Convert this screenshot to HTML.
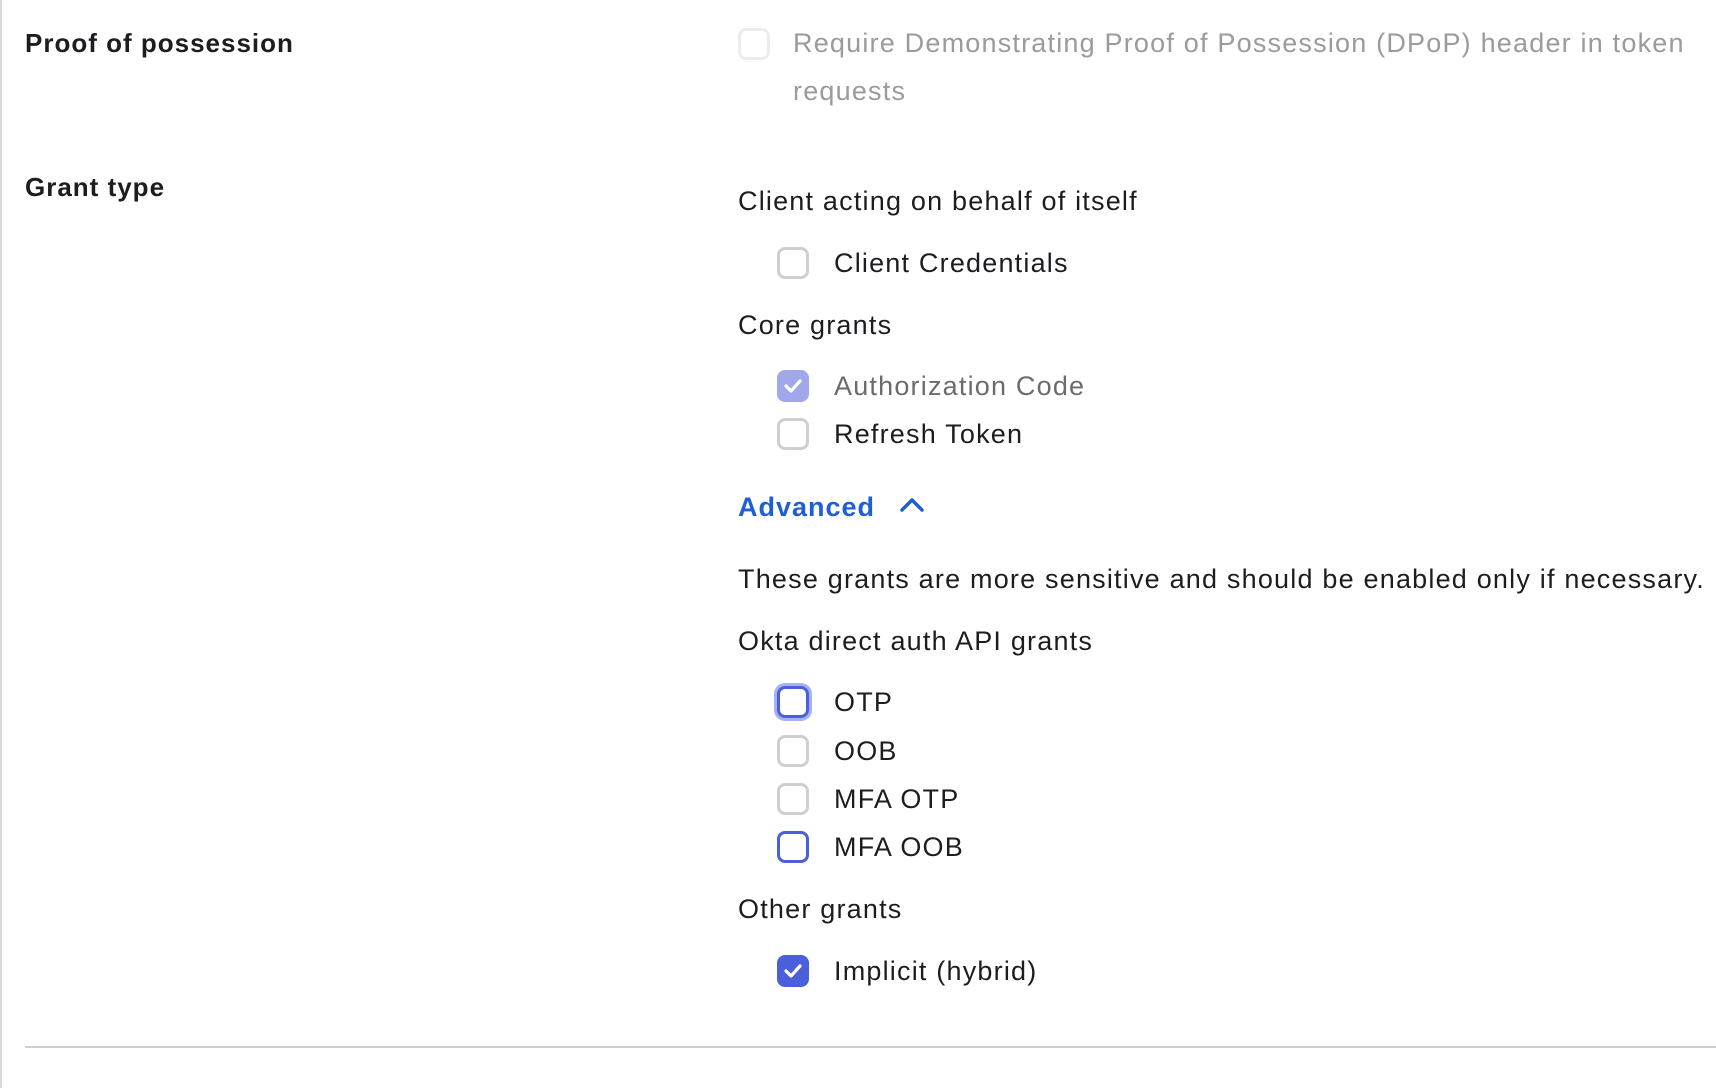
<!DOCTYPE html>
<html><head><meta charset="utf-8"><style>
html,body{margin:0;padding:0;background:#fff;width:1716px;height:1088px;overflow:hidden;position:relative;font-family:"Liberation Sans",sans-serif;color:#1d1d21}
.t{position:absolute;height:40px;line-height:40px;font-size:27px;letter-spacing:1.2px;white-space:nowrap}
.b{font-weight:bold;font-size:26px;letter-spacing:1px}
.cb{position:absolute;width:26px;height:26px;border:3px solid #cfcfd1;border-radius:8px;box-sizing:content-box}
.cb svg{position:absolute;left:3px;top:4px}
</style></head><body>
<div style="position:absolute;left:0;top:0;width:2px;height:1088px;background:#d7d7dc"></div>
<div class="t b" style="left:25px;top:23px">Proof of possession</div>
<div class="cb" style="left:738px;top:28px;border-color:#ececee"></div>
<div class="t" style="left:793px;top:23px;color:#9a9a9f">Require Demonstrating Proof of Possession (DPoP) header in token</div>
<div class="t" style="left:793px;top:71px;color:#9a9a9f">requests</div>

<div class="t b" style="left:25px;top:167px">Grant type</div>
<div class="t" style="left:738px;top:181px">Client acting on behalf of itself</div>
<div class="cb" style="left:777px;top:247px"></div>
<div class="t" style="left:834px;top:243px">Client Credentials</div>
<div class="t" style="left:738px;top:305px">Core grants</div>
<div class="cb" style="left:777px;top:370px;background:#a0a8eb;border-color:#a0a8eb"><svg width="20" height="18" viewBox="0 0 20 18"><path d="M3 9 L8 14 L17 4" fill="none" stroke="#fff" stroke-width="3.2" stroke-linecap="round" stroke-linejoin="round"/></svg></div>
<div class="t" style="left:834px;top:366px;color:#6b6b70">Authorization Code</div>
<div class="cb" style="left:777px;top:418px"></div>
<div class="t" style="left:834px;top:414px">Refresh Token</div>
<div class="t b" style="left:738px;top:487px;color:#1f5fd6;font-size:27px">Advanced</div>
<svg style="position:absolute;left:899px;top:496px" width="26" height="18" viewBox="0 0 26 18"><path d="M3 14 L13 4 L23 14" fill="none" stroke="#1f5fd6" stroke-width="3.5" stroke-linecap="round" stroke-linejoin="round"/></svg>
<div class="t" style="left:738px;top:559px">These grants are more sensitive and should be enabled only if necessary.</div>
<div class="t" style="left:738px;top:621px">Okta direct auth API grants</div>
<div class="cb" style="left:777px;top:686px;border-color:#4b5fdb;box-shadow:0 0 0 3px #a8b0ef"></div>
<div class="t" style="left:834px;top:682px">OTP</div>
<div class="cb" style="left:777px;top:735px"></div>
<div class="t" style="left:834px;top:731px">OOB</div>
<div class="cb" style="left:777px;top:783px"></div>
<div class="t" style="left:834px;top:779px">MFA OTP</div>
<div class="cb" style="left:777px;top:831px;border-color:#4b5fdb"></div>
<div class="t" style="left:834px;top:827px">MFA OOB</div>
<div class="t" style="left:738px;top:889px">Other grants</div>
<div class="cb" style="left:777px;top:955px;background:#4b5fdb;border-color:#4b5fdb"><svg width="20" height="18" viewBox="0 0 20 18"><path d="M3 9 L8 14 L17 4" fill="none" stroke="#fff" stroke-width="3.2" stroke-linecap="round" stroke-linejoin="round"/></svg></div>
<div class="t" style="left:834px;top:951px">Implicit (hybrid)</div>
<div style="position:absolute;left:25px;top:1046px;width:1691px;height:2px;background:#cfcfd3"></div>
</body></html>
